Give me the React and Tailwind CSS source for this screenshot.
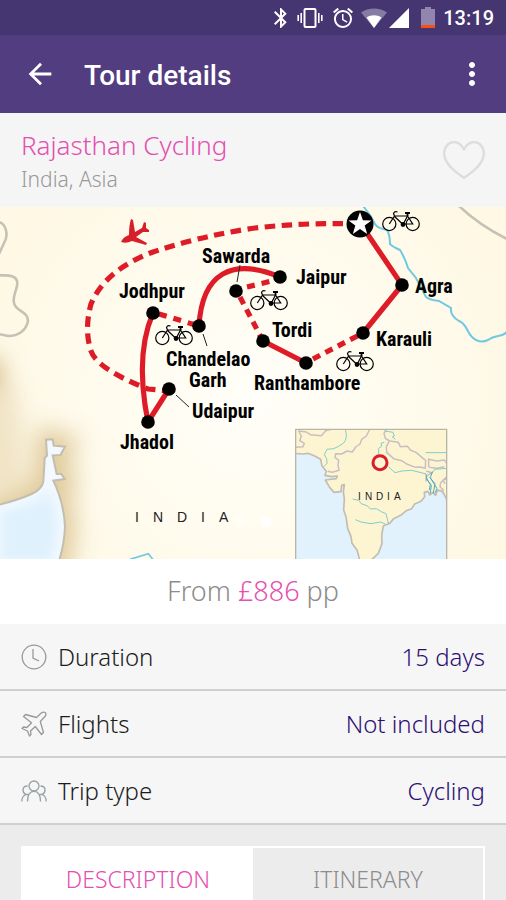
import { useState } from "react";
import {
  MdAccessAlarm,
  MdArrowBack,
  MdBluetooth,
  MdMoreVert,
} from "react-icons/md";

function StatusBar() {
  return (
    <div className="flex h-[35px] shrink-0 items-center justify-end bg-[#453570] pr-3 text-white">
      <MdBluetooth className="h-6 w-6" />
      <svg viewBox="0 0 26 24" className="ml-1 h-6 w-[26px]" fill="none" stroke="currentColor">
        <rect x="7.5" y="3" width="11" height="18" rx="1" strokeWidth="2" />
        <path d="M4.2 7v10M21.8 7v10" strokeWidth="1.6" />
        <path d="M1.2 9v6M24.8 9v6" strokeWidth="1.6" />
      </svg>
      <MdAccessAlarm className="ml-2 h-6 w-6" />
      <svg viewBox="0 0 26 20" className="ml-1.5 h-5 w-[26px]" fill="currentColor">
        <path d="M0 4.5C7.500-.8 18.500-.8 26 4.500L13 20z" opacity="0.35" />
        <path d="M5.500 9.500C10 6.500 16 6.500 20.500 9.500L13 20z" />
      </svg>
      <svg viewBox="0 0 20 20" className="ml-0.5 h-5 w-5" fill="currentColor">
        <path d="M20 0v20H0z" />
      </svg>
      <svg viewBox="0 0 14 21" className="ml-3 h-[21px] w-[14px]">
        <path d="M4 0h6v2h4v19H0V2h4z" fill="#9186ad" />
        <path d="M0 18h14v3H0z" fill="#fb4f0e" />
      </svg>
      <span className="ml-2 font-[Roboto,sans-serif] text-xl leading-6 font-medium">13:19</span>
    </div>
  );
}

function AppBar() {
  return (
    <header className="flex h-[78px] shrink-0 items-center bg-[#513d7f] px-4 text-white">
      <button type="button" aria-label="Back" className="flex w-12 justify-center">
        <MdArrowBack className="h-[34px] w-[34px]" />
      </button>
      <h1 className="ml-5 flex-1 pt-1 font-[Roboto,sans-serif] text-[28px] leading-8 font-medium">
        Tour details
      </h1>
      <button type="button" aria-label="More options">
        <MdMoreVert className="h-9 w-9" />
      </button>
    </header>
  );
}

function Bike({ x, y }) {
  return (
    <g transform={`translate(${x} ${y})`} fill="none" stroke="#000" strokeWidth="1.200">
      <circle cx="7.300" cy="13" r="6.600" />
      <circle cx="30.700" cy="13" r="6.600" />
      <path d="M7.300 13L12.500 5H25.500L21 13.500L12.500 5.500M25.500 5L30.700 13H21M12.500 5L11.500 2.500Q12.500 0 15.500 1" />
      <path d="M25.500 5V2.200M23 2h5" strokeWidth="1.800" />
      <circle cx="21" cy="13.500" r="1.800" fill="#000" />
    </g>
  );
}

const stops = [
  [236, 291], [280, 277], [153, 313], [199, 326], [263, 341],
  [306, 363], [363, 333], [402, 285], [169, 389], [148, 422],
];

const places = [
  ["Sawarda", 202, 263], ["Jaipur", 296, 284], ["Jodhpur", 119, 298],
  ["Agra", 415, 293], ["Tordi", 272, 337], ["Karauli", 376, 346],
  ["Ranthambore", 254, 390], ["Udaipur", 192, 418], ["Jhadol", 120, 449],
];

const SEA =
  "M-20 528C40 515 65 505 95 492Q125 478 130 455Q133 410 134 384L141 377L138 329L158 328L161 347L195 350L181 375L158 376L170 432L184 432L194 447L160 452Q192 520 195 590Q193 640 178 690L178 720H-20z";

function RouteMap() {
  return (
    <svg
      viewBox="0 207 506 352"
      className="block w-full shrink-0"
      role="img"
      aria-label="Route map of Rajasthan"
    >
      <defs>
        <radialGradient id="land" gradientUnits="userSpaceOnUse" cx="250" cy="400" r="270">
          <stop offset="0" stopColor="#fffef8" />
          <stop offset="0.450" stopColor="#fffcf0" />
          <stop offset="1" stopColor="#fef8e5" />
        </radialGradient>
        <filter id="glow" x="-150%" y="-100%" width="400%" height="300%">
          <feGaussianBlur stdDeviation="36" />
        </filter>
        <filter id="shore" x="-30%" y="-30%" width="160%" height="160%">
          <feGaussianBlur stdDeviation="16" />
        </filter>
        <clipPath id="sea"><path d={SEA} /></clipPath>
        <clipPath id="inset"><rect x="128" y="298" width="453" height="400" /></clipPath>
      </defs>
      <rect y="207" width="506" height="352" fill="url(#land)" />

      <g transform="translate(0 330) scale(0.333333)">
        <path d={SEA} fill="#dcc492" stroke="#dcc492" strokeWidth="60" filter="url(#glow)" opacity="0.9" />
        <path d="M-60 170H50L80 480H-60z" fill="#e3cfa4" filter="url(#glow)" opacity="0.5" />
        <ellipse cx="-30" cy="135" rx="36" ry="55" fill="#cdb27a" filter="url(#glow)" />
        <path d={SEA} fill="#dff1fd" />
        <g clipPath="url(#sea)">
          <path d={SEA} fill="none" stroke="#f3f9fe" strokeWidth="46" filter="url(#shore)" />
        </g>
        <path d={SEA} fill="none" stroke="#c3beb0" strokeWidth="6" />
        <path d="M390 688L445 671L460 690" fill="none" stroke="#6fc9e2" strokeWidth="5" />
      </g>

      <g fill="none" stroke="#c6c1b4" strokeWidth="2.600">
        <path d="M-1 222C6 224 9 235 4 243L-1 254M-1 275C5 276 15 274 17 281S12 294 14 303S28 311 28 321C26 331 18 336 8 336L-1 334" />
        <path d="M459 206Q479 225 507 239" />
      </g>
      <path
        d="M363 206Q371 215 375 224Q377 228 387 230Q390 235 390 244Q393 247 400 250Q405 258 408 268L416 278L426 297Q430 300 439 301L451 308Q450 316 459 321C467 324 466 331 472 337Q479 344 488 340C496 334 501 338 507 332"
        fill="none" stroke="#6fc9e2" strokeWidth="2"
      />

      <g fill="none" stroke="#de1c28" strokeWidth="5.200">
        <path
          d="M343 223.600Q300 223 255 228Q200 236 153 252Q105 270 91 304Q84 330 91 351Q97 369 148 389L169 391"
          strokeDasharray="10.500 6.500"
        />
        <path d="M153 313Q137 350 145 405L148 422L169 389M199 326C202 273 232 257 280 277M263 341L306 363M360 223L402 285L363 333" />
        <path d="M159 314L199 326M247 287L280 279" strokeDasharray="8 7" />
        <path d="M240 297L263 341M313 359L363 333" strokeDasharray="8 6" />
      </g>
      <path
        d="M121 242Q123 237 129 235Q129 225 131 219L133 220L135 232L142 228L144 222L146 223L146 228L149 230L149 232L143 232L136 237L147 243L146 245L132 241Q126 244 121 242z"
        fill="#d71f2b"
      />

      <path d="M240 265L237 282M203 334L207 346M176 395L189 407" stroke="#222" strokeWidth="1" />
      {stops.map(([x, y]) => (
        <circle key={`${x}-${y}`} cx={x} cy={y} r="6.800" />
      ))}
      <circle cx="360" cy="224" r="13.500" />
      <path
        d="M360 212L362.900 220.200L371.500 220.400L364.700 225.600L367.200 234L360 229.100L352.800 234L355.300 225.600L348.500 220.400L357.100 220.200z"
        fill="#fff"
      />
      <Bike x={382} y={211} />
      <Bike x={250} y={290} />
      <Bike x={155} y={325} />
      <Bike x={336} y={351} />

      <g className="font-['Roboto_Condensed',Roboto,sans-serif] text-[20px] font-bold">
        {places.map(([name, x, y]) => (
          <text key={name} x={x} y={y}>{name}</text>
        ))}
        <text>
          <tspan x="166" y="366">Chandelao</tspan>
          <tspan x="189" y="387">Garh</tspan>
        </text>
      </g>
      <text x="135 153 177 201 219" y="522" fill="#222" className="font-['Liberation_Sans',sans-serif] text-[14px]">
        INDIA
      </text>

      <g transform="translate(253 330) scale(0.333333)" fill="none" strokeLinejoin="round">
        <g clipPath="url(#inset)">
          <rect x="128" y="298" width="453" height="400" fill="#fdf5d2" />
          <g fill="#e1f2fd" stroke="#c2bdb0" strokeWidth="5">
            <path d="M120 370L150 372L165 370L185 378L203 388L207 408L220 424L216 436L235 440L253 438L250 446L217 450L230 472L243 487L264 485L266 466L274 464L271 486L274 505L272 540L279 560L284 595L294 620L297 640L312 660L320 690L120 705z" />
            <path d="M355 690L376 670L387 641L386 616L391 588L410 580L422 566L443 556L460 542L476 536L485 522L504 514L515 500L514 487L525 484L530 495L540 487L548 496L553 481L564 482L571 489L581 507L590 705H355z" />
          </g>
          <g stroke="#c7bfc2" strokeWidth="4.500">
            <path d="M120 352L150 350L154 340L140 332L145 318L137 303L160 306L172 314L205 317L218 302L235 298M349 300L340 318L326 328L321 342L308 351L298 366L282 363L266 372L248 371L246 382L257 391L255 405L258 421L238 427L224 424" />
            <path d="M400 298L393 310L397 325L410 333L436 337L442 350L464 349L472 360L490 368L511 386L518 391L517 415L501 411L488 412L461 402L446 392L422 386L401 367L400 350L408 335M527 388L552 393L574 390L581 399M528 412L553 415L574 410M527 385V412M520 423L536 428L520 439L519 455M581 440L563 458L561 471L570 478L570 490M581 447L570 450L576 462" />
          </g>
          <g stroke="#80cdc6" strokeWidth="3">
            <path d="M277 298Q285 325 272 339L257 349L242 356L222 358L214 374L221 386L222 400L212 410M395 303L420 307L424 318L418 321L427 328M394 337L384 340L386 349L377 355V374M406 410L426 428L447 423L476 421L516 431M518 368H581M299 507L317 511L325 521L344 528L352 537L370 536L385 545L399 551L407 583M307 569L324 576L354 581L382 576L397 582M581 415L545 418L535 433" />
            <path d="M518 430L522 448L532 463L529 480M530 442L546 461L541 490M538 425L532 443L552 476L547 488M519 444L535 466L532 490" stroke="#4da9c2" />
          </g>
        </g>
        <path d="M128 690V298H581V690" stroke="#b9b6a7" strokeWidth="4" />
        <circle cx="381" cy="398" r="21" fill="#fdf5d2" stroke="#d91d2c" strokeWidth="9" />
      </g>
      <text x="358 365 376 387 394" y="500" fill="#222" className="font-['Liberation_Sans',sans-serif] text-[10px]">
        INDIA
      </text>
      <circle cx="240" cy="522" r="5" fill="#fff" opacity="0.5" />
      <circle cx="266" cy="522" r="5.500" fill="#fff" />
    </svg>
  );
}

function ClockIcon() {
  return (
    <svg viewBox="0 0 26 26" className="h-[26px] w-[26px]" fill="none" stroke="#999" strokeWidth="1.300">
      <circle cx="13" cy="13" r="11.800" />
      <path d="M12 5v9l6 3" />
    </svg>
  );
}

function PlaneIcon() {
  return (
    <svg viewBox="0 0 26 26" className="h-[26px] w-[26px]" fill="none" stroke="#999" strokeWidth="1.300" strokeLinejoin="round">
      <path d="M15.500 6.500L20.500 1.800Q22.500.6 24.300 1.500Q25.500 3.300 24.200 5.300L19.300 10.500L22.500 21.500L20.500 23.500L14.300 15.500L9.500 20L10 23.500L8.500 25L6.500 20L1 17.500L2.500 16L6 16.500L10.500 11.700L2.500 5.500L4.500 3.500z" />
    </svg>
  );
}

function PeopleIcon() {
  return (
    <svg viewBox="0 0 26 26" className="h-[26px] w-[26px]" fill="none" stroke="#96a1a3" strokeWidth="1.300">
      <circle cx="13" cy="8" r="5" />
      <path d="M6.500 23.500C6.500 16.500 9 13.300 13 13.300S19.500 16.500 19.500 23.500M6.500 8Q2 8 2 12Q2 15.500 5 16.500Q.8 18 .8 23.500M19.500 8Q24 8 24 12Q24 15.500 21 16.500Q25.200 18 25.200 23.500M5 16.500H7.500M18.500 16.500H21" />
    </svg>
  );
}

const facts = [
  { label: "Duration", value: "15 days", Icon: ClockIcon },
  { label: "Flights", value: "Not included", Icon: PlaneIcon },
  { label: "Trip type", value: "Cycling", Icon: PeopleIcon },
];

const tabs = ["DESCRIPTION", "ITINERARY"];

export default function App() {
  const [liked, setLiked] = useState(false);
  const [active, setActive] = useState(tabs[0]);

  return (
    <div className="flex h-screen flex-col overflow-hidden bg-[#ececec] font-['Noto_Sans','Open_Sans',sans-serif] font-light">
      <StatusBar />
      <AppBar />
      <section className="flex h-[94px] shrink-0 items-center justify-between bg-[#f5f5f5] px-[21px]">
        <div className="pt-0.5">
          <h2 className="text-[26px] leading-9 text-[#e44fb0]">Rajasthan Cycling</h2>
          <p className="text-[21px] leading-8 text-[#999]">India, Asia</p>
        </div>
        <button type="button" aria-label="Add to favourites" aria-pressed={liked} onClick={() => setLiked(!liked)}>
          <svg
            viewBox="0 0 42 38"
            className="h-[38px] w-[42px]"
            fill={liked ? "#e44fb0" : "none"}
            stroke="#ddd"
            strokeWidth="2.300"
            strokeLinejoin="round"
          >
            <path d="M21 8.500C18.500 3.500 15 1.200 11 1.200C5 1.200 1.200 6 1.200 12.500C1.200 22 10 29.500 21 36.800C32 29.500 40.800 22 40.800 12.500C40.800 6 37 1.200 31 1.200C27 1.200 23.500 3.500 21 8.500z" />
          </svg>
        </button>
      </section>
      <RouteMap />
      <p className="flex h-[65px] shrink-0 items-center justify-center bg-white text-[27px] whitespace-pre text-[#8c8c8c]">
        From <span className="text-[#e44fb0]">£886</span> pp
      </p>
      <dl className="shrink-0 bg-[#f6f6f6] text-2xl">
        {facts.map(({ label, value, Icon }) => (
          <div key={label} className="flex h-[67px] items-center border-b-2 border-[#d0d0d0] px-[21px]">
            <Icon />
            <dt className="ml-[11px] flex-1 text-[#1c1c1c]">{label}</dt>
            <dd className="text-[#2d0f74]">{value}</dd>
          </div>
        ))}
      </dl>
      <div role="tablist" className="mx-[21px] mt-[21px] flex h-[67px] shrink-0 border-2 border-white text-[23px]">
        {tabs.map((tab) => (
          <button
            key={tab}
            type="button"
            role="tab"
            aria-selected={active === tab}
            onClick={() => setActive(tab)}
            className={active === tab ? "flex-1 bg-white text-[#e44fb0]" : "flex-1 text-[#8c8c8c]"}
          >
            {tab}
          </button>
        ))}
      </div>
    </div>
  );
}
